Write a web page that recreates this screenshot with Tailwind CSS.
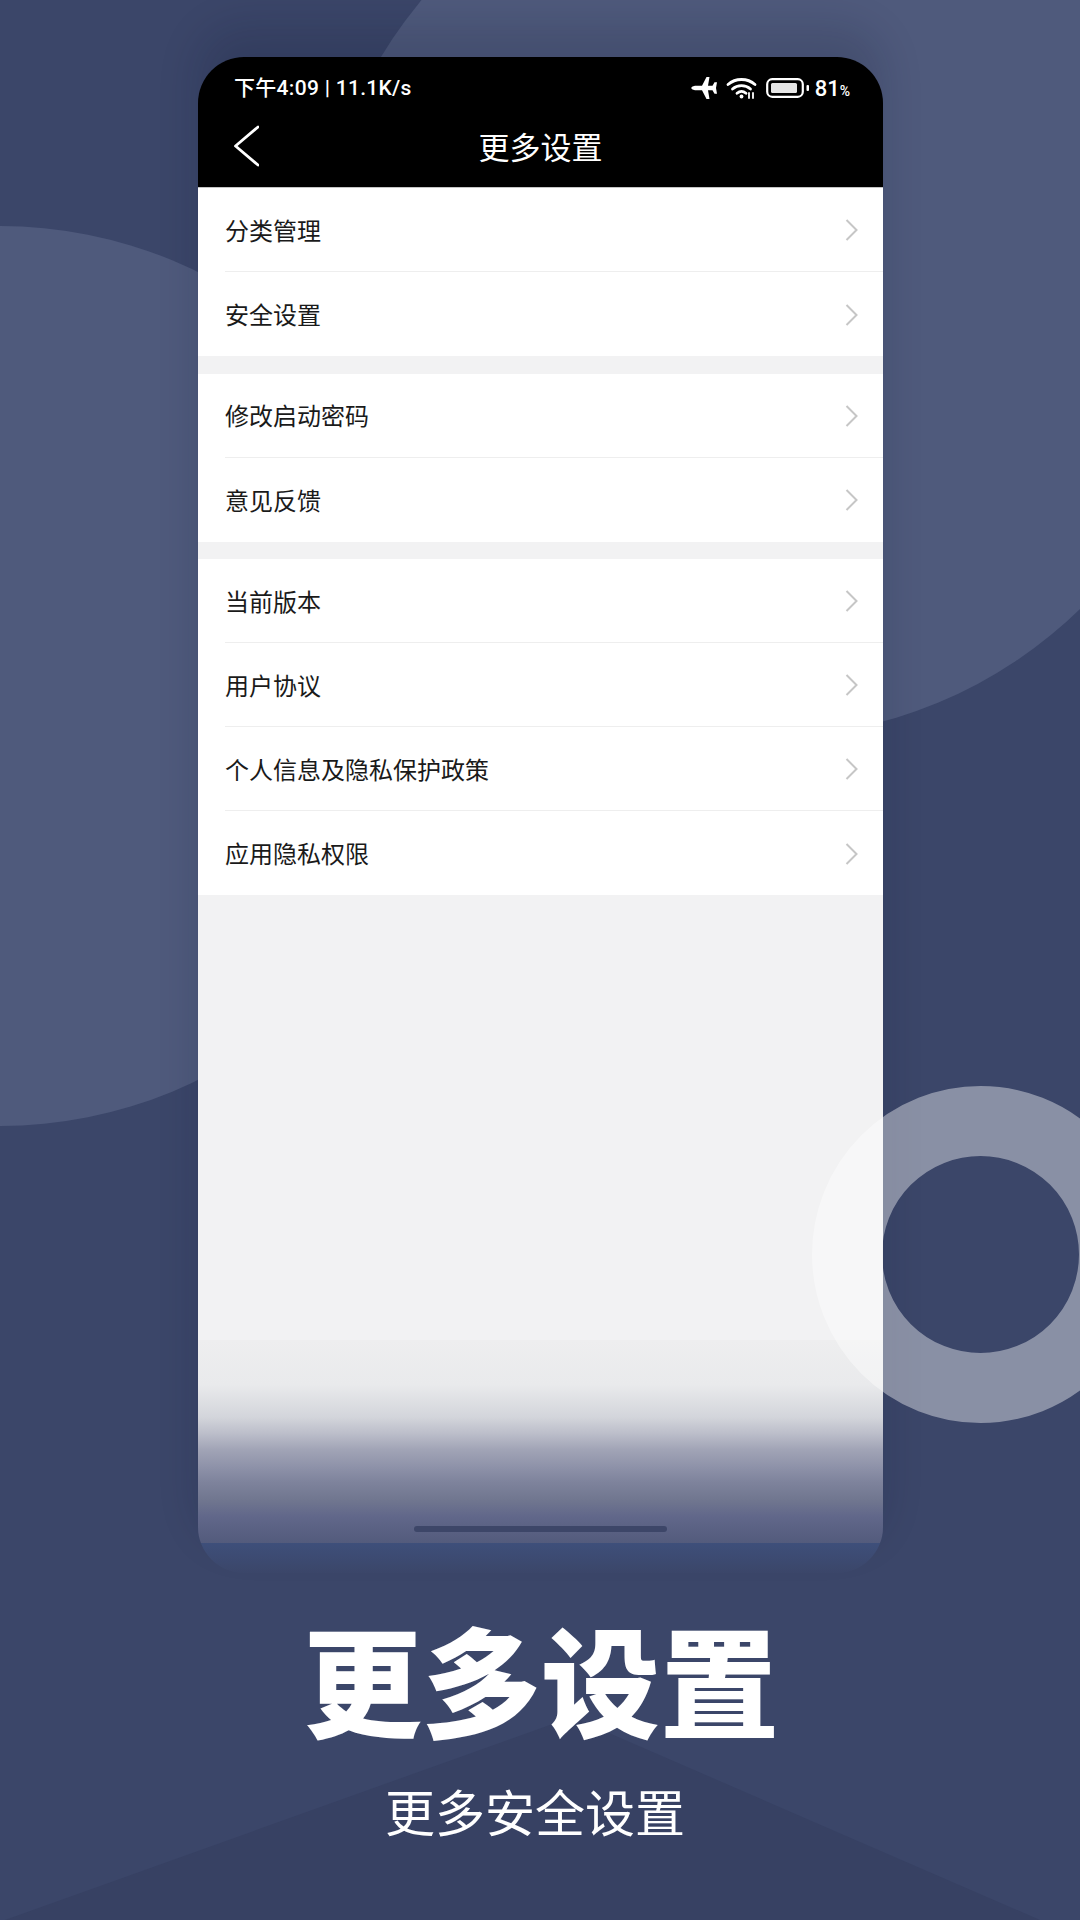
<!DOCTYPE html>
<html lang="zh-CN">
<head>
<meta charset="utf-8">
<script src="https://cdn.jsdelivr.net/npm/@tailwindcss/browser@4"></script>
</head>
<body>
<div class="relative w-[1080px] h-[1920px] overflow-hidden bg-[#3b4669] font-['Noto_Sans_CJK_SC',sans-serif]">
  <div class="absolute left-[-450px] top-[226px] w-[900px] h-[900px] rounded-full bg-[#4f5a7c]"></div>
  <div class="absolute left-[317px] top-[-161px] w-[898px] h-[898px] rounded-full bg-[#4f5a7c]"></div>
  <svg class="absolute left-0 top-0" width="1080" height="1920" viewBox="0 0 1080 1920"><polygon points="572,1717 1040,1920 5,1920" fill="#374163"/></svg>

  <div class="relative pt-[57px]">
    <div class="ml-[198px] w-[685px] h-[1516px] rounded-[46px] overflow-hidden flex flex-col shadow-[0_-30px_40px_rgba(15,20,45,0.16)]">
      <div class="bg-black text-white border-b border-[#c4c4c4] h-[131px]">
        <div class="h-[62px] flex items-center justify-between pl-[36px] pr-[33px]">
          <span class="text-[21px] leading-none tracking-[0.3px] font-['Roboto','Noto_Sans_CJK_SC',sans-serif] font-medium mt-[1px]">下午4:09 | 11.1K/s</span>
          <div class="flex items-center">
            <svg width="26" height="22" viewBox="0 0 26 22" fill="#fff"><path d="M0 11Q1 9 4 8.800H11L15.500 0H18.500L17 8.800H21.500L23.500 5.300H26L25 11 26 16.700H23.500L21.500 13.200H17L18.500 22H15.500L11 13.200H4Q1 13 0 11Z"/></svg>
            <svg class="ml-[9px]" width="32" height="22" viewBox="0 0 32 22" fill="none" stroke="#fff" stroke-width="2.800" stroke-linecap="round"><path d="M2 7.500C9.500.800 21.500.800 29 7.500"/><path d="M6.500 12C11.500 7.500 19.500 7.500 24.500 12"/><path d="M11 16.300c2.800-2.400 6.200-2.400 9 0"/><circle cx="15.500" cy="19.500" r="1.900" fill="#fff" stroke="none"/><path d="M23 16v5M27 16v5" stroke-width="1.800"/></svg>
            <svg class="ml-[8px]" width="44" height="20" viewBox="0 0 44 20" fill="none"><rect x="1.200" y="1.200" width="35.600" height="17.600" rx="5" stroke="#fff" stroke-width="2.200"/><rect x="5" y="5" width="26" height="10" rx="1.500" fill="#e6e6e6"/><rect x="40.500" y="7" width="2.500" height="6" rx="1" fill="#fff"/></svg>
            <span class="ml-[5px] text-[22px] leading-none font-['Roboto',sans-serif] font-medium mt-[1px]">81<span class="text-[14px]">%</span></span>
          </div>
        </div>
        <div class="h-[53px] grid grid-cols-[1fr_auto_1fr] items-center">
          <svg class="ml-[36px]" width="25" height="42" viewBox="0 0 25 42" fill="none" stroke="#fff" stroke-width="2.800" stroke-linecap="round" stroke-linejoin="round"><path d="M24 2 1.500 21 24 40"/></svg>
          <span class="text-[31px] leading-none">更多设置</span>
          <span></span>
        </div>
      </div>

      <div class="flex-1 bg-[#f2f2f3]">
        <div class="bg-white mb-[17.500px]">
          <div class="ml-[27px] pr-[25px] h-[84px] flex items-center justify-between border-b border-[#eeeeee]"><span class="text-[24px] leading-none text-[#1a1a1a]">分类管理</span><svg class="mt-[1px]" width="13" height="22" viewBox="0 0 13 22" fill="none" stroke="#c6c6c6" stroke-width="2"><path d="m1.500 1 10 10-10 10"/></svg></div>
          <div class="ml-[27px] pr-[25px] h-[84px] flex items-center justify-between"><span class="text-[24px] leading-none text-[#1a1a1a]">安全设置</span><svg class="mt-[1px]" width="13" height="22" viewBox="0 0 13 22" fill="none" stroke="#c6c6c6" stroke-width="2"><path d="m1.500 1 10 10-10 10"/></svg></div>
        </div>
        <div class="bg-white mb-[17.500px]">
          <div class="ml-[27px] pr-[25px] h-[84px] flex items-center justify-between border-b border-[#eeeeee]"><span class="text-[24px] leading-none text-[#1a1a1a]">修改启动密码</span><svg class="mt-[1px]" width="13" height="22" viewBox="0 0 13 22" fill="none" stroke="#c6c6c6" stroke-width="2"><path d="m1.500 1 10 10-10 10"/></svg></div>
          <div class="ml-[27px] pr-[25px] h-[84px] flex items-center justify-between"><span class="text-[24px] leading-none text-[#1a1a1a]">意见反馈</span><svg class="mt-[1px]" width="13" height="22" viewBox="0 0 13 22" fill="none" stroke="#c6c6c6" stroke-width="2"><path d="m1.500 1 10 10-10 10"/></svg></div>
        </div>
        <div class="bg-white">
          <div class="ml-[27px] pr-[25px] h-[84px] flex items-center justify-between border-b border-[#eeeeee]"><span class="text-[24px] leading-none text-[#1a1a1a]">当前版本</span><svg class="mt-[1px]" width="13" height="22" viewBox="0 0 13 22" fill="none" stroke="#c6c6c6" stroke-width="2"><path d="m1.500 1 10 10-10 10"/></svg></div>
          <div class="ml-[27px] pr-[25px] h-[84px] flex items-center justify-between border-b border-[#eeeeee]"><span class="text-[24px] leading-none text-[#1a1a1a]">用户协议</span><svg class="mt-[1px]" width="13" height="22" viewBox="0 0 13 22" fill="none" stroke="#c6c6c6" stroke-width="2"><path d="m1.500 1 10 10-10 10"/></svg></div>
          <div class="ml-[27px] pr-[25px] h-[84px] flex items-center justify-between border-b border-[#eeeeee]"><span class="text-[24px] leading-none text-[#1a1a1a]">个人信息及隐私保护政策</span><svg class="mt-[1px]" width="13" height="22" viewBox="0 0 13 22" fill="none" stroke="#c6c6c6" stroke-width="2"><path d="m1.500 1 10 10-10 10"/></svg></div>
          <div class="ml-[27px] pr-[25px] h-[84px] flex items-center justify-between"><span class="text-[24px] leading-none text-[#1a1a1a]">应用隐私权限</span><svg class="mt-[1px]" width="13" height="22" viewBox="0 0 13 22" fill="none" stroke="#c6c6c6" stroke-width="2"><path d="m1.500 1 10 10-10 10"/></svg></div>
        </div>
      </div>

      <div class="relative h-[203px] bg-[linear-gradient(to_bottom,#eeeeef_0%,#e9eaec_22%,#d3d5db_38%,#bcbeca_46%,#a1a4b6_54%,#8d91a8_63%,#7e839c_70%,#70768f_79%,#61678a_87%,#535b7c_100%)]">
        <div class="absolute left-[216px] bottom-[11px] w-[253px] h-[6px] rounded-full bg-[#3d4668]"></div>
      </div>
      <div class="h-[30px] bg-[linear-gradient(to_bottom,#3e4f7a,#3b4669)]"></div>
    </div>

    <div class="mt-[44px] pl-[2px] text-center text-white text-[119px] leading-[120px] font-black">更多设置</div>
    <div class="mt-[48px] pr-[10px] text-center text-white text-[50px] leading-[50px] font-normal">更多安全设置</div>
  </div>

  <div class="absolute left-[812px] top-[1086px] w-[337px] h-[337px] rounded-full border-[70px] border-white/40"></div>
</div>
</body>
</html>
